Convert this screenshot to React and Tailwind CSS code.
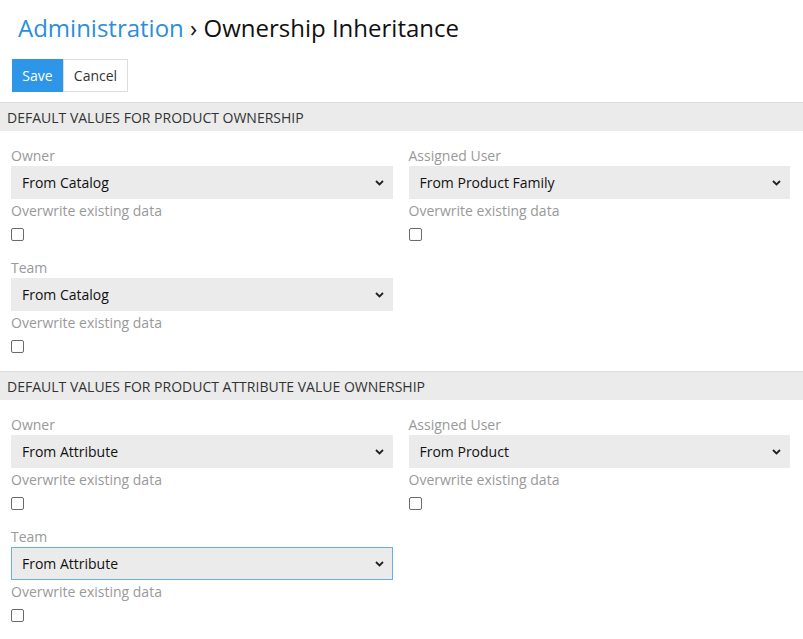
const sections = [
  {
    title: "Default values for Product ownership",
    owner: "From Catalog",
    assigned: "From Product Family",
    team: "From Catalog",
  },
  {
    title: "Default values for Product Attribute Value ownership",
    owner: "From Attribute",
    assigned: "From Product",
    team: "From Attribute",
    focusTeam: true,
  },
];

function Chevron() {
  return (
    <svg width="9" height="6" viewBox="0 0 9 6" className="shrink-0">
      <path d="M1 1 L4.5 4.5 L8 1" fill="none" stroke="#222" strokeWidth="1.8" />
    </svg>
  );
}

function Field({ label, value, focused }) {
  return (
    <div className="flex flex-col">
      <div className="text-[14px] leading-[21px] text-[#999]">{label}</div>
      <div
        className={
          "h-[33px] flex items-center justify-between pl-[10px] pr-[8px] bg-[#ebebeb] border " +
          (focused ? "border-[#66afe9]" : "border-[#ebebeb]")
        }
      >
        <span className="text-[14px] text-[#111]">{value}</span>
        <Chevron />
      </div>
      <div className="mt-[2px] text-[14px] leading-[20px] text-[#999]">Overwrite existing data</div>
      <div className="mt-[7px] w-[13px] h-[13px] border border-[#6b6b6b] rounded-[2px] bg-white"></div>
    </div>
  );
}

function Section({ s }) {
  return (
    <div>
      <div className="h-[29px] border-t border-[#dcdcdc] bg-[#ebebeb] flex items-center px-[7px] text-[14px] uppercase text-[#333]">
        {s.title}
      </div>
      <div className="grid grid-cols-2 gap-x-4 gap-y-4 pl-[11px] pr-[13px] pt-[14px] pb-[18px]">
        <Field label="Owner" value={s.owner} />
        <Field label="Assigned User" value={s.assigned} />
        <Field label="Team" value={s.team} focused={s.focusTeam} />
      </div>
    </div>
  );
}

export default function App() {
  return (
    <div className="w-[803px] min-h-[639px] bg-white" style={{ fontFamily: '"Open Sans", sans-serif' }}>
      <div className="pt-[12px] px-[18px] text-[24px] leading-[32px]">
        <span className="text-[#2b8fd9]">Administration</span>
        <span className="text-[#111]"> › Ownership Inheritance</span>
      </div>
      <div className="flex mt-[15px] ml-[12px]">
        <button className="h-[33px] w-[51px] bg-[#2d96e8] text-white text-[14px]">Save</button>
        <button className="h-[33px] w-[65px] bg-white text-[#333] text-[14px] border border-[#ddd]">Cancel</button>
      </div>
      <div className="mt-[10px]">
        {sections.map((s) => (
          <Section key={s.title} s={s} />
        ))}
      </div>
    </div>
  );
}
